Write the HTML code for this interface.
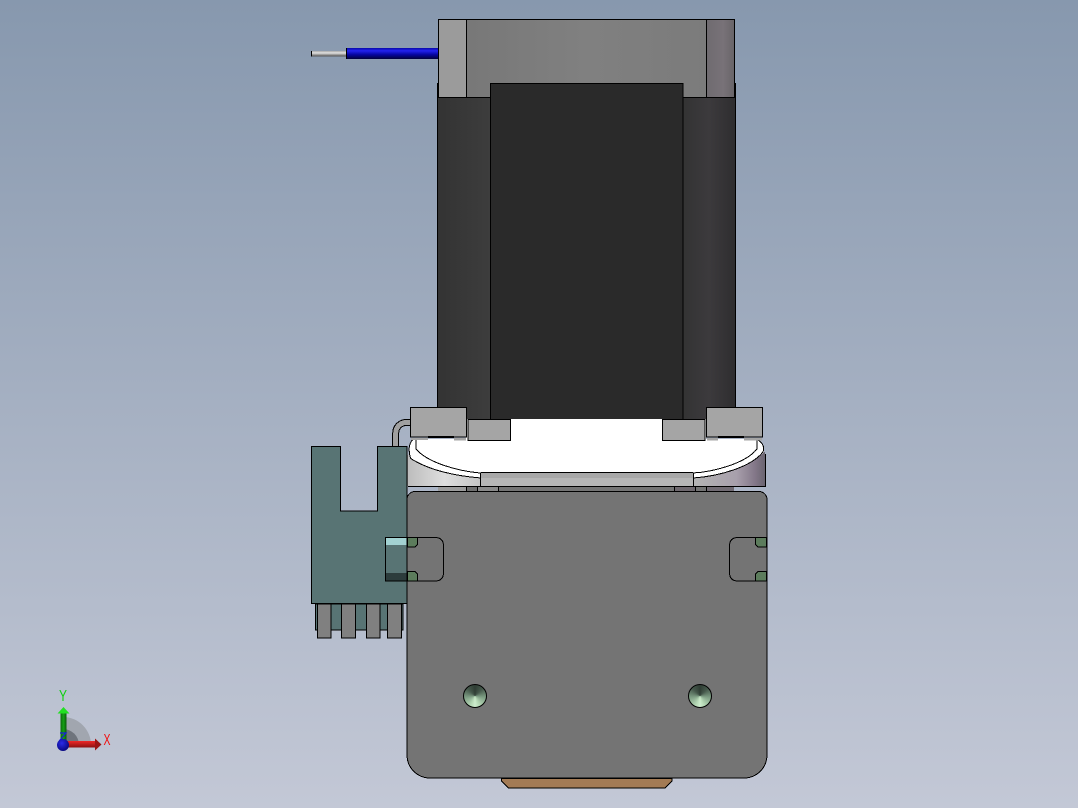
<!DOCTYPE html>
<html>
<head>
<meta charset="utf-8">
<style>
html,body{margin:0;padding:0;width:1078px;height:808px;overflow:hidden}
body{position:relative;background:linear-gradient(180deg,#8798ae 0%,#c3c8d6 100%);font-family:"Liberation Sans",sans-serif}
svg{position:absolute;left:0;top:0}
.h{position:absolute;width:22px;height:22px;border:1px solid #000;border-radius:50%;box-sizing:content-box;background:conic-gradient(from 0deg,#2f3d34 0deg,#45584b 45deg,#7f9f85 100deg,#b5d8b5 155deg,#cdeccd 180deg,#b5d8b5 205deg,#7f9f85 260deg,#45584b 315deg,#2f3d34 360deg)}
</style>
</head>
<body>
<svg width="1078" height="808" viewBox="0 0 1078 808" xmlns="http://www.w3.org/2000/svg">
<defs>
<linearGradient id="blue" x1="0" y1="0" x2="0" y2="1"><stop offset="0" stop-color="#0808a8"/><stop offset=".25" stop-color="#2222f0"/><stop offset=".6" stop-color="#0606a0"/><stop offset="1" stop-color="#02023c"/></linearGradient>
<linearGradient id="silver" x1="0" y1="0" x2="0" y2="1"><stop offset="0" stop-color="#a8a8a8"/><stop offset=".35" stop-color="#e2e2e2"/><stop offset="1" stop-color="#4c4c4c"/></linearGradient>
<linearGradient id="top" x1="0" y1="0" x2="1" y2="0"><stop offset="0" stop-color="#767676"/><stop offset=".5" stop-color="#808080"/><stop offset="1" stop-color="#7a7a7a"/></linearGradient>
<linearGradient id="rcap" x1="0" y1="0" x2="1" y2="0"><stop offset="0" stop-color="#6f6b70"/><stop offset=".6" stop-color="#787278"/><stop offset="1" stop-color="#686468"/></linearGradient>
<linearGradient id="bl" x1="0" y1="0" x2="1" y2="0"><stop offset="0" stop-color="#333"/><stop offset="1" stop-color="#3d3d3d"/></linearGradient>
<linearGradient id="br" x1="0" y1="0" x2="1" y2="0"><stop offset="0" stop-color="#333"/><stop offset=".5" stop-color="#3c3a3d"/><stop offset="1" stop-color="#2e2d2f"/></linearGradient>
<linearGradient id="ll" x1="0" y1="0" x2="1" y2="0"><stop offset="0" stop-color="#bdbdbd"/><stop offset=".5" stop-color="#dedede"/><stop offset="1" stop-color="#c4c4c4"/></linearGradient>
<linearGradient id="lr" x1="0" y1="0" x2="1" y2="0"><stop offset="0" stop-color="#b4b4b4"/><stop offset=".6" stop-color="#a8a0ac"/><stop offset=".85" stop-color="#85798a"/><stop offset="1" stop-color="#6a6470"/></linearGradient>
<linearGradient id="arG" x1="0" y1="0" x2="1" y2="0"><stop offset="0" stop-color="#0c6a0c"/><stop offset=".5" stop-color="#16a016"/><stop offset="1" stop-color="#0a5a0a"/></linearGradient>
<linearGradient id="arR" x1="0" y1="0" x2="0" y2="1"><stop offset="0" stop-color="#f02828"/><stop offset="1" stop-color="#8a1010"/></linearGradient>
<radialGradient id="ball" cx=".4" cy=".35" r=".7"><stop offset="0" stop-color="#2a2ae8"/><stop offset="1" stop-color="#06067a"/></radialGradient>
</defs>
<g stroke="#000" stroke-width="1" shape-rendering="crispEdges">
<!-- wire -->
<rect x="311.500" y="51" width="35" height="5.500" fill="url(#silver)" stroke="none"/>
<rect x="311" y="51" width="1" height="5.500" fill="#000" stroke="none"/>
<rect x="346" y="48" width="92" height="11" fill="url(#blue)" stroke="none"/>
<rect x="346" y="48" width="1.200" height="11" fill="#000" stroke="none"/>
<!-- motor top -->
<rect x="438.500" y="19.500" width="296" height="78" fill="url(#top)"/>
<rect x="438.500" y="19.500" width="28" height="78" fill="#9b9b9b"/>
<rect x="706.500" y="19.500" width="28" height="78" fill="url(#rcap)"/>
<path d="M437.500 83V97M735.500 83V97" fill="none"/>
<!-- motor body -->
<rect x="437.500" y="97.500" width="53" height="322" fill="url(#bl)"/>
<rect x="682.500" y="97.500" width="53" height="322" fill="url(#br)"/>
<rect x="490.500" y="83.500" width="192.500" height="336" fill="#2a2a2a"/>
<path d="M490.500 83V420M683 83V420M490 83.500H683" fill="none"/>
<!-- pipe -->
<path d="M395.700 447V433A10.500 10.500 0 0 1 406.200 422.500H411" fill="none" stroke="#000" stroke-width="7"/>
<path d="M395.700 447V433A10.500 10.500 0 0 1 406.200 422.500H411" fill="none" stroke="#a0a0a0" stroke-width="5"/>
<!-- lower housing sides -->
<path d="M408 453V486H481V478C455 476 428 470 410 458Z" fill="url(#ll)" stroke="none"/>
<path d="M765 452V486H693V478C725 476 752 466 764 452Z" fill="url(#lr)" stroke="none"/>
<rect x="480.500" y="473" width="213" height="5" fill="#a8a8a8" stroke="none"/>
<rect x="480.500" y="478" width="213" height="8" fill="#b6b6b6" stroke="none"/>
<!-- white dome -->
<path d="M466 419H706V439H756C762 441 765 447 764 452C752 466 722 476 693 478V472.500H481V478C455 476 428 470 410 458C408 450 409 443 413 439H466Z" fill="#fff" stroke="none"/>
<path d="M481 478C455 476 428 470 410 458" fill="none"/>
<path d="M480 473C458 471 428 463 416 449V439" fill="none"/>
<path d="M693 478C722 476 752 466 763 452" fill="none"/>
<path d="M693 473C712 472 745 464 757 449V439" fill="none"/>
<path d="M481 472.500H693" fill="none"/>
<path d="M480.500 472.500V486M693.500 472.500V486" fill="none"/>
<path d="M408 486.500H766" fill="none"/>
<path d="M410.500 458C408 450 409 443 413 439.500M763 452C765 447 762 441 756 439.500" fill="none"/>
<path d="M407.500 455V486" fill="none" stroke="#8d8d8d"/>
<path d="M765.500 454V486" fill="none"/>
<!-- blocks -->
<rect x="410.500" y="407.500" width="56" height="29.500" fill="#a5a5a5"/>
<rect x="706.500" y="407.500" width="56" height="29.500" fill="#a5a5a5"/>
<path d="M428 437H454M718 437H744" stroke-width="2" fill="none"/>
<rect x="411" y="438" width="17" height="2" fill="#a5a5a5" stroke="none"/>
<rect x="454" y="438" width="12" height="2.500" fill="#a5a5a5" stroke="none"/>
<rect x="707" y="438" width="11" height="2.500" fill="#a5a5a5" stroke="none"/>
<rect x="744" y="438" width="18" height="2.500" fill="#a5a5a5" stroke="none"/>
<rect x="468" y="419.500" width="42.500" height="21" fill="#a5a5a5"/>
<rect x="662.500" y="419.500" width="42.500" height="21" fill="#a5a5a5"/>
<!-- strips -->
<rect x="438" y="487" width="28" height="5" fill="#9c9c9c" stroke="none"/>
<rect x="466" y="487" width="11" height="5" fill="#707070" stroke="none"/>
<rect x="477" y="487" width="21" height="5" fill="#8a8a8a" stroke="none"/>
<rect x="498" y="487" width="176" height="5" fill="#747474" stroke="none"/>
<rect x="674" y="487" width="21" height="5" fill="#6e686e" stroke="none"/>
<rect x="695" y="487" width="11" height="5" fill="#747474" stroke="none"/>
<rect x="706" y="487" width="28" height="5" fill="#716b73" stroke="none"/>
<path d="M466.500 486V492M477.500 486V492M498.500 486V492M674.500 486V492M695.500 486V492M706.500 486V492" fill="none"/>
<!-- teal bracket -->
<rect x="315.500" y="604" width="87.500" height="26" fill="#587474"/>
<rect x="317.500" y="604" width="13.500" height="34" fill="#808080"/>
<rect x="341.500" y="604" width="14" height="34" fill="#808080"/>
<rect x="366.500" y="604" width="13.500" height="34" fill="#808080"/>
<rect x="387.500" y="604" width="14" height="34" fill="#808080"/>
<path d="M311.500 446.500H340.500V511H377.500V446.500H407V603.500H311.500Z" fill="#587474"/>
<rect x="385.500" y="537.500" width="22" height="43.500" fill="#587474"/>
<rect x="386" y="538" width="21" height="7" fill="#a3d2d2" stroke="none"/>
<rect x="386" y="573" width="21" height="7.500" fill="#2c3c3c" stroke="none"/>
<!-- plate -->
<path d="M415 491.500H759A8 8 0 0 1 767 499.500V755A23 23 0 0 1 744 778H430A23 23 0 0 1 407 755V499.500A8 8 0 0 1 415 491.500Z" fill="#747474"/>
<path d="M407 537.500H435Q443.500 537.500 443.500 546V572.500Q443.500 581 435 581H407" fill="none"/>
<path d="M767 537.500H738Q729.500 537.500 729.500 546V572.500Q729.500 581 738 581H767" fill="none"/>
<path d="M407.500 537.500H417.500V544.500L415 547H407.500Z" fill="#5c7c5c"/>
<path d="M407.500 581H417.500V574L415 571.500H407.500Z" fill="#5c7c5c"/>
<path d="M766.500 537.500H755.500V544.500L758 547H766.500Z" fill="#5c7c5c"/>
<path d="M766.500 581H755.500V574L758 571.500H766.500Z" fill="#5c7c5c"/>
<!-- tab -->
<path d="M501.500 778.500H672V781L665 788H508.500L501.500 781Z" fill="#a37b55"/>
</g>
<!-- triad -->
<path d="M63 745V717A28 28 0 0 1 91 745Z" fill="#a1a6af"/>
<path d="M63 745V729A16 16 0 0 1 79 745Z" fill="#6f747c"/>
<rect x="60.500" y="713" width="6" height="32" fill="url(#arG)"/>
<path d="M63.500 707L69.500 713.500H57.500Z" fill="#22e022"/>
<rect x="63" y="741" width="32" height="6.500" fill="url(#arR)"/>
<path d="M95 738.500L101.500 744.500L95 750.500Z" fill="#9a1414"/>
<path d="M60 733H66L60 740H66" fill="none" stroke="#1a1ae0" stroke-width="1.200"/>
<circle cx="63" cy="745" r="6" fill="url(#ball)"/>
<text x="59" y="701" font-size="16" textLength="8" lengthAdjust="spacingAndGlyphs" fill="#10d010" font-family="Liberation Sans, sans-serif">Y</text>
<text x="103.500" y="745" font-size="16" textLength="7" lengthAdjust="spacingAndGlyphs" fill="#f01010" font-family="Liberation Sans, sans-serif">X</text>
</svg>
<div class="h" style="left:462.500px;top:683.500px"></div>
<div class="h" style="left:687.500px;top:683.500px"></div>
</body>
</html>
